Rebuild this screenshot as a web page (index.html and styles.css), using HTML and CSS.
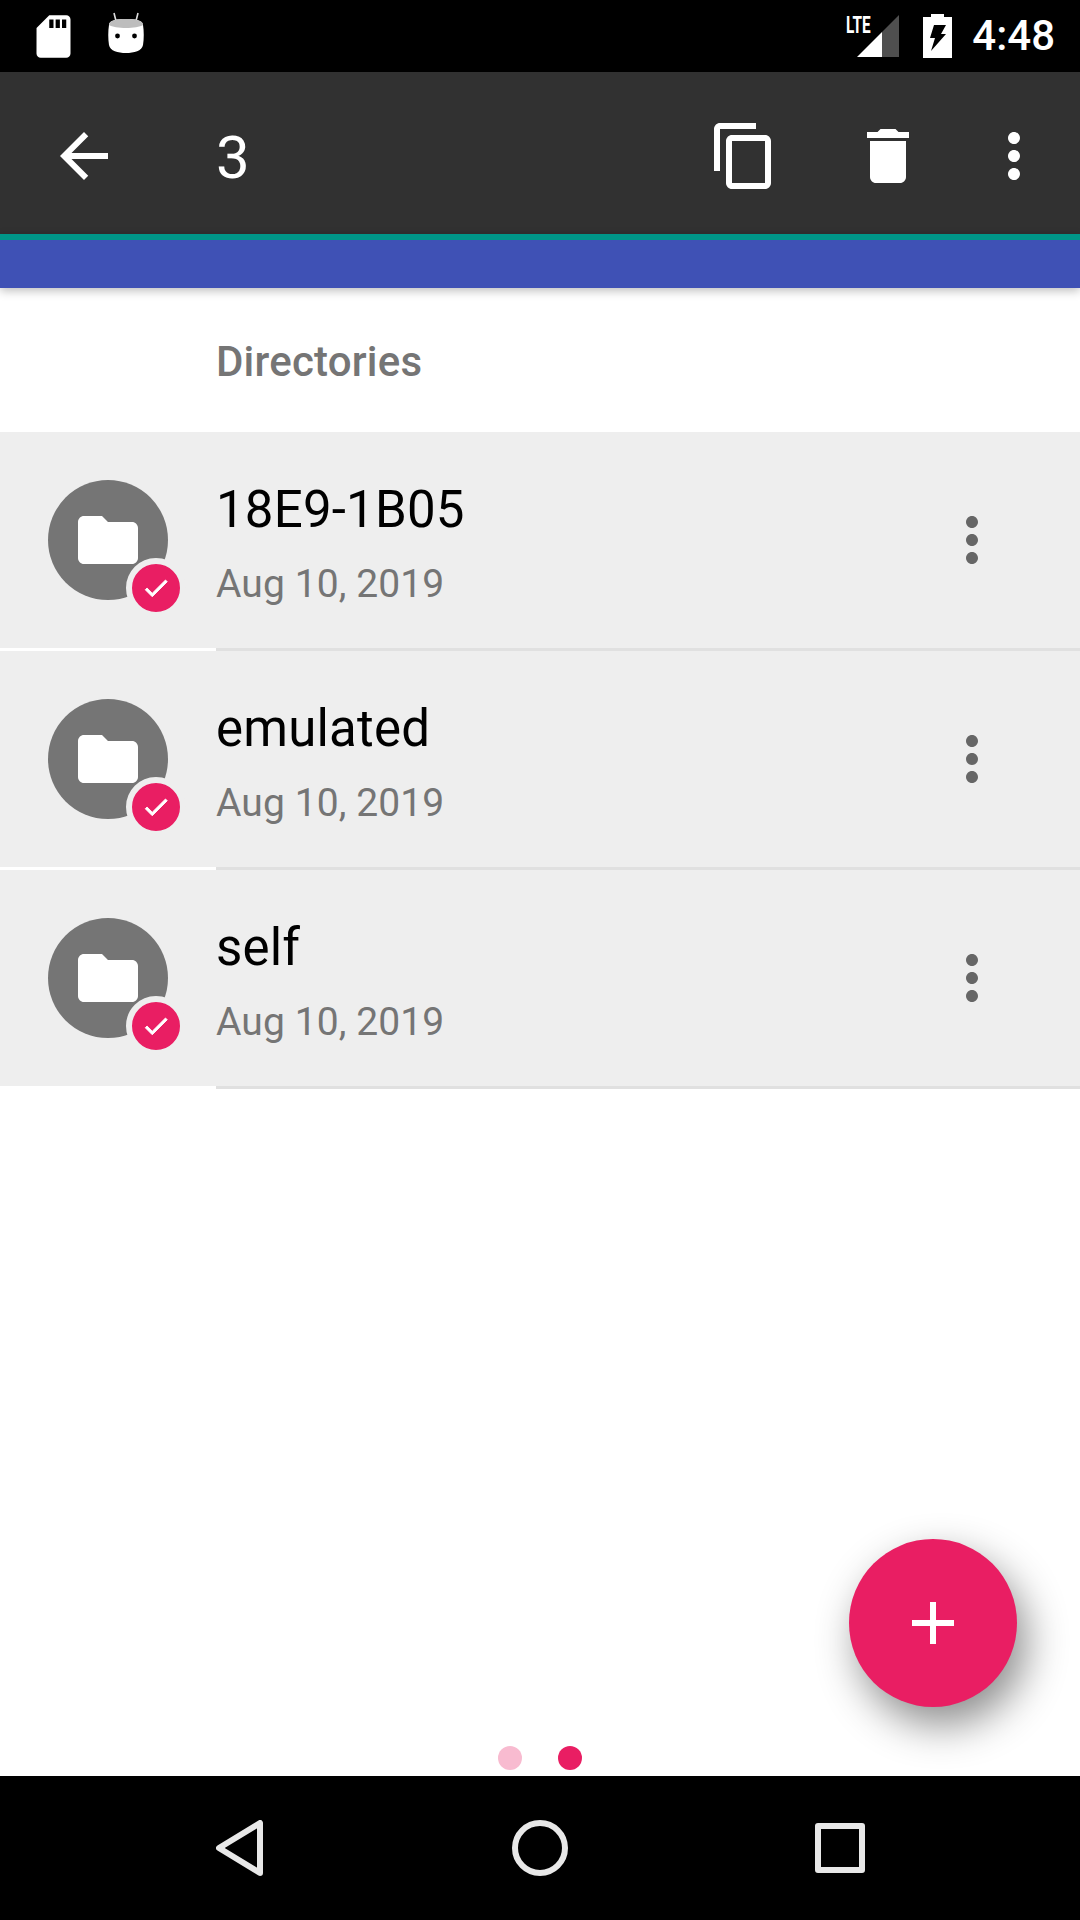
FILE: index.html
```html
<!DOCTYPE html>
<html lang="en">
<head>
    <meta charset="UTF-8">
    <meta name="viewport" content="width=device-width, initial-scale=1.0">
    <title>Directories</title>
    <link rel="stylesheet" href="styles.css">
</head>
<body>
    <div class="status-bar">
        <svg class="sd-icon" viewBox="0 0 24 24"><path fill="#fff" d="M18 2h-8L4.02 8 4 20c0 1.1.9 2 2 2h12c1.1 0 2-.9 2-2V4c0-1.1-.9-2-2-2zm-6 6h-2V4h2v4zm3 0h-2V4h2v4zm3 0h-2V4h2v4z"/></svg>
        <svg class="android-icon" viewBox="0 0 36 42">
            <path d="M8 9 6 1M28 9l2-8" stroke="#ddd" stroke-width="1.6" fill="none"/>
            <path fill="#fff" d="M1 13C1 8 9 7 18 7s17 1 17 6c1 6 1 14 0 20-1 6-9 8-17 8S2 39 1 33C0 27 0 19 1 13z"/>
            <path fill="#bdbdbd" d="M1 13C1 8 9 7 18 7s17 1 17 6c-3 2-10 3-17 3S4 15 1 13z"/>
            <circle cx="9.5" cy="24" r="2.4" fill="#000"/>
            <circle cx="26.5" cy="24" r="2.4" fill="#000"/>
        </svg>
        <div class="status-right">
            <div class="signal">
                <span class="lte">LTE</span>
                <svg class="signal-icon" viewBox="0 0 42 42">
                    <path fill="#4f4f4f" d="M42 0v42H25V17z"/>
                    <path fill="#fff" d="M0 42 25 17v25z"/>
                </svg>
            </div>
            <svg class="battery-icon" viewBox="0 0 29 44">
                <path fill="#fff" d="M8 0h13v3h8v41H0V3h8z"/>
                <path fill="#000" d="M11 11h12l-5 9h5L8 37l4-13H7z"/>
            </svg>
            <span class="clock">4:48</span>
        </div>
    </div>

    <div class="action-bar">
        <svg class="icon back-icon" viewBox="0 0 24 24"><path d="M20 11H7.83l5.59-5.59L12 4l-8 8 8 8 1.41-1.41L7.83 13H20v-2z"/></svg>
        <span class="selected-count">3</span>
        <svg class="icon copy-icon" viewBox="0 0 24 24"><path d="M16 1H4c-1.1 0-2 .9-2 2v14h2V3h12V1zm3 4H8c-1.1 0-2 .9-2 2v14c0 1.1.9 2 2 2h11c1.1 0 2-.9 2-2V7c0-1.1-.9-2-2-2zm0 16H8V7h11v14z"/></svg>
        <svg class="icon delete-icon" viewBox="0 0 24 24"><path d="M6 19c0 1.1.9 2 2 2h8c1.1 0 2-.9 2-2V7H6v12zM19 4h-3.5l-1-1h-5l-1 1H5v2h14V4z"/></svg>
        <svg class="icon more-icon" viewBox="0 0 24 24"><path d="M12 8c1.1 0 2-.9 2-2s-.9-2-2-2-2 .9-2 2 .9 2 2 2zm0 2c-1.1 0-2 .9-2 2s.9 2 2 2 2-.9 2-2-.9-2-2-2zm0 6c-1.1 0-2 .9-2 2s.9 2 2 2 2-.9 2-2-.9-2-2-2z"/></svg>
    </div>
    <div class="tab-strip"></div>

    <main class="content">
        <h2 class="section-title">Directories</h2>

        <div class="row">
            <div class="avatar">
                <svg class="folder-icon" viewBox="0 0 20 16"><path d="M8 0H2C.9 0 0 .9 0 2v12c0 1.1.9 2 2 2h16c1.1 0 2-.9 2-2V4c0-1.1-.9-2-2-2h-8L8 0z"/></svg>
                <span class="badge"><svg class="check-icon" viewBox="0 0 24 24"><path d="M9 16.17 4.83 12l-1.42 1.41L9 19 21 7l-1.41-1.41z"/></svg></span>
            </div>
            <div class="row-text">
                <div class="row-name">18E9-1B05</div>
                <div class="row-date">Aug 10, 2019</div>
            </div>
            <svg class="row-more" viewBox="0 0 24 24"><path d="M12 8c1.1 0 2-.9 2-2s-.9-2-2-2-2 .9-2 2 .9 2 2 2zm0 2c-1.1 0-2 .9-2 2s.9 2 2 2 2-.9 2-2-.9-2-2-2zm0 6c-1.1 0-2 .9-2 2s.9 2 2 2 2-.9 2-2-.9-2-2-2z"/></svg>
        </div>
        <div class="divider"></div>

        <div class="row">
            <div class="avatar">
                <svg class="folder-icon" viewBox="0 0 20 16"><path d="M8 0H2C.9 0 0 .9 0 2v12c0 1.1.9 2 2 2h16c1.1 0 2-.9 2-2V4c0-1.1-.9-2-2-2h-8L8 0z"/></svg>
                <span class="badge"><svg class="check-icon" viewBox="0 0 24 24"><path d="M9 16.17 4.83 12l-1.42 1.41L9 19 21 7l-1.41-1.41z"/></svg></span>
            </div>
            <div class="row-text">
                <div class="row-name">emulated</div>
                <div class="row-date">Aug 10, 2019</div>
            </div>
            <svg class="row-more" viewBox="0 0 24 24"><path d="M12 8c1.1 0 2-.9 2-2s-.9-2-2-2-2 .9-2 2 .9 2 2 2zm0 2c-1.1 0-2 .9-2 2s.9 2 2 2 2-.9 2-2-.9-2-2-2zm0 6c-1.1 0-2 .9-2 2s.9 2 2 2 2-.9 2-2-.9-2-2-2z"/></svg>
        </div>
        <div class="divider"></div>

        <div class="row">
            <div class="avatar">
                <svg class="folder-icon" viewBox="0 0 20 16"><path d="M8 0H2C.9 0 0 .9 0 2v12c0 1.1.9 2 2 2h16c1.1 0 2-.9 2-2V4c0-1.1-.9-2-2-2h-8L8 0z"/></svg>
                <span class="badge"><svg class="check-icon" viewBox="0 0 24 24"><path d="M9 16.17 4.83 12l-1.42 1.41L9 19 21 7l-1.41-1.41z"/></svg></span>
            </div>
            <div class="row-text">
                <div class="row-name">self</div>
                <div class="row-date">Aug 10, 2019</div>
            </div>
            <svg class="row-more" viewBox="0 0 24 24"><path d="M12 8c1.1 0 2-.9 2-2s-.9-2-2-2-2 .9-2 2 .9 2 2 2zm0 2c-1.1 0-2 .9-2 2s.9 2 2 2 2-.9 2-2-.9-2-2-2zm0 6c-1.1 0-2 .9-2 2s.9 2 2 2 2-.9 2-2-.9-2-2-2z"/></svg>
        </div>
        <div class="divider"></div>

        <button class="fab">
            <svg class="plus-icon" viewBox="0 0 42 42"><path d="M18 0h6v18h18v6H24v18h-6V24H0v-6h18z"/></svg>
        </button>
        <div class="pager">
            <span class="dot dot-faded"></span>
            <span class="dot"></span>
        </div>
    </main>

    <div class="nav-bar">
        <svg class="nav-back" viewBox="0 0 48 56"><path d="M44 3v50L3 28z" fill="none" stroke="#e8e8e8" stroke-width="6" stroke-linejoin="round"/></svg>
        <span class="nav-home"></span>
        <span class="nav-recent"></span>
    </div>
</body>
</html>
```

FILE: styles.css
```css
body {
    display: flex;
    flex-direction: column;
    width: 1080px;
    height: 1920px;
    margin: 0;
    overflow: hidden;
    font-family: Roboto, "Noto Sans", sans-serif;
    background-color: white;
}
.status-bar {
    display: flex;
    align-items: flex-start;
    height: 72px;
    background: black;
    color: white;
    flex-shrink: 0;
}
.sd-icon {
    width: 51px;
    height: 51px;
    margin: 11px 0 0 28px;
}
.android-icon {
    width: 36px;
    height: 42px;
    margin: 12px 0 0 29px;
}
.status-right {
    display: flex;
    align-items: flex-start;
    margin-left: auto;
    padding-right: 25px;
}
.signal {
    position: relative;
    width: 54px;
    height: 42px;
    margin-top: 15px;
}
.lte {
    position: absolute;
    left: 1px;
    top: -2px;
    font-size: 24px;
    font-weight: 700;
    line-height: 24px;
    transform: scaleX(0.64);
    transform-origin: left top;
}
.signal-icon {
    position: absolute;
    right: 0;
    top: 0;
    width: 42px;
    height: 42px;
}
.battery-icon {
    width: 29px;
    height: 44px;
    margin: 14px 20px 0 24px;
}
.clock {
    font-size: 42px;
    font-weight: 500;
    line-height: 72px;
}
.action-bar {
    display: flex;
    align-items: center;
    box-sizing: border-box;
    height: 162px;
    padding: 6px 0 0 48px;
    background: #313131;
    flex-shrink: 0;
}
.icon {
    width: 72px;
    height: 72px;
    fill: white;
    flex-shrink: 0;
}
.selected-count {
    margin: 4px 0 0 96px;
    font-size: 60px;
    color: white;
    line-height: 72px;
}
.copy-icon {
    margin-left: auto;
}
.delete-icon {
    margin-left: 72px;
}
.more-icon {
    margin-left: 54px;
    margin-right: 30px;
}
.tab-strip {
    height: 48px;
    border-top: 6px solid #009688;
    background: #3f51b5;
    box-shadow: 0 3px 9px rgba(0, 0, 0, 0.25);
    flex-shrink: 0;
    position: relative;
}
.content {
    display: flex;
    flex-direction: column;
    flex: 1;
    position: relative;
}
.section-title {
    box-sizing: border-box;
    height: 144px;
    margin: 0;
    padding: 3px 0 0 216px;
    font-size: 42px;
    font-weight: 500;
    letter-spacing: 0.2px;
    line-height: 141px;
    color: #757575;
}
.row {
    display: flex;
    align-items: center;
    height: 216px;
    padding-left: 48px;
    background: #eeeeee;
}
.avatar {
    display: flex;
    align-items: center;
    justify-content: center;
    position: relative;
    width: 120px;
    height: 120px;
    margin-right: 48px;
    border-radius: 50%;
    background: #757575;
}
.folder-icon {
    width: 60px;
    height: 48px;
    fill: white;
}
.badge {
    display: flex;
    align-items: center;
    justify-content: center;
    position: absolute;
    left: 78px;
    top: 78px;
    width: 48px;
    height: 48px;
    border: 6px solid #eeeeee;
    border-radius: 50%;
    background: #e91e63;
}
.check-icon {
    width: 30px;
    height: 30px;
    fill: white;
    stroke: white;
    stroke-width: 0.7;
}
.row-text {
    flex: 1;
    padding-top: 7px;
}
.row-name {
    font-size: 51px;
    letter-spacing: 0.2px;
    line-height: 60px;
    color: black;
}
.row-date {
    margin-top: 20px;
    font-size: 39px;
    letter-spacing: 0.1px;
    line-height: 48px;
    color: #757575;
}
.row-more {
    width: 72px;
    height: 72px;
    margin-right: 72px;
    fill: #666666;
}
.divider {
    height: 3px;
    margin-left: 216px;
    background: #e0e0e0;
}
.fab {
    display: flex;
    align-items: center;
    justify-content: center;
    position: absolute;
    right: 63px;
    bottom: 69px;
    width: 168px;
    height: 168px;
    padding: 0;
    border: none;
    border-radius: 50%;
    background: #e91e63;
    box-shadow: 9px 18px 42px rgba(0, 0, 0, 0.45);
}
.plus-icon {
    width: 42px;
    height: 42px;
    fill: white;
}
.pager {
    display: flex;
    justify-content: center;
    gap: 36px;
    margin-top: auto;
    padding-bottom: 6px;
}
.dot {
    width: 24px;
    height: 24px;
    border-radius: 50%;
    background: #e91e63;
}
.dot-faded {
    background: #f8bbd0;
}
.nav-bar {
    display: flex;
    align-items: center;
    justify-content: center;
    height: 144px;
    background: black;
    flex-shrink: 0;
}
.nav-back {
    width: 48px;
    height: 56px;
    margin-right: 248px;
}
.nav-home {
    width: 44px;
    height: 44px;
    border: 6px solid #e8e8e8;
    border-radius: 50%;
}
.nav-recent {
    width: 38px;
    height: 38px;
    margin-left: 247px;
    border: 6px solid #e8e8e8;
    border-radius: 3px;
}
```
